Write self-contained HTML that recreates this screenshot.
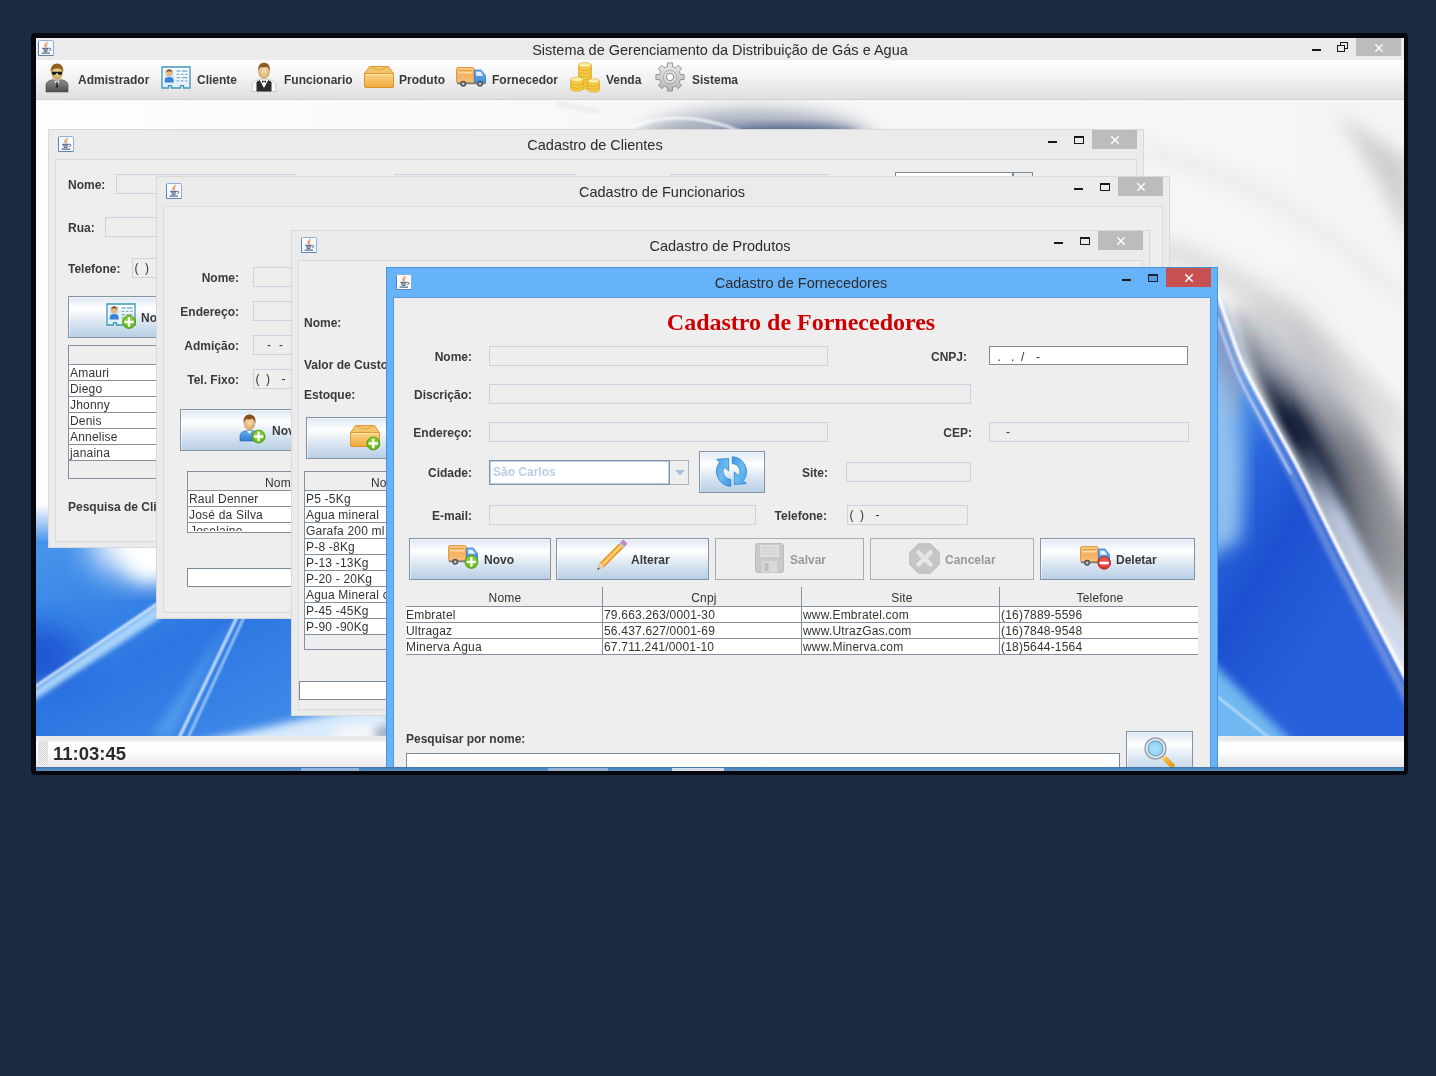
<!DOCTYPE html><html lang="pt"><head><meta charset="utf-8"><title>Sistema de Gerenciamento da Distribuição de Gás e Agua</title><style>
html,body{margin:0;padding:0}
body{background:#1c2a43;width:1436px;height:1076px;position:relative;overflow:hidden;font-family:"Liberation Sans",sans-serif}
#frame{position:absolute;left:31px;top:33px;width:1377px;height:742px;background:#06080d;border-radius:4px}
#clip{position:absolute;left:36px;top:38px;width:1368px;height:733px;overflow:hidden;background:#ececec}
#pg{position:absolute;left:-36px;top:-38px;width:1436px;height:1076px;will-change:transform}
#pg div,#pg span{position:absolute;box-sizing:content-box;white-space:nowrap}
.lb{font:bold 12px/14px "Liberation Sans",sans-serif;color:#3a3a3a}
.ld{color:#999 !important}
.tx{font:12px/14px "Liberation Sans",sans-serif;color:#333;letter-spacing:.2px}
.ti{font:14.500px/18px "Liberation Sans",sans-serif;color:#2c2c2c}
.tf{border:1px solid #c8d4e2;background:#eeeeee}
.tfw{border:1px solid #7a8a99;background:#fff}
.btn{border:1px solid #8492a2;background:linear-gradient(#dde8f3 0%,#ffffff 30%,#dde8f3 60%,#b8cfe5 100%);box-shadow:inset 1px 1px 0 rgba(255,255,255,.55)}
.btnd{border:1px solid #a9aeb4;background:#eeeeee}
.win{background:#ebebeb;border:1px solid #d9d9d9}
.pan{background:#eeeeee;border:1px solid #dadada}
.cx{background:#bcbcbc}
.tb{background:#fff;border:1px solid #8490a0}
.th{background:#eeeeee;border-bottom:1px solid #8490a0}
.row{border-bottom:1px solid #8490a0;background:#fff}
</style></head><body><div id="frame"></div><div id="clip"><div id="pg"><div style="left:36px;top:38px;width:1368px;height:22px;background:#ebebeb"></div><svg style="position:absolute;left:38px;top:40px;overflow:visible" width="16" height="16" viewBox="0 0 16 16" ><rect x="0.5" y="0.5" width="15" height="15" rx="1" fill="#f7fafe" stroke="#8fb0d8"/><path d="M0.5 1.500v14h15" fill="none" stroke="#5a84b8" stroke-width="1"/><path d="M8.800 2.200c1.700 1.500-2 2.400-.4 4.500M7.100 3.800c.9 1-1.100 1.600 0 2.800" stroke="#e79a52" stroke-width="1.200" fill="none" stroke-linecap="round"/><path d="M4.200 8.300h6.600M5 9.900h5.200M5.800 11.300h3.600" stroke="#3f4f74" stroke-width="1" fill="none"/><path d="M3.600 13.100h8.400" stroke="#3f4f74" stroke-width="1.100" fill="none"/><path d="M11.200 8.300c2.200-.4 2.200 2 .1 2.300" stroke="#3f4f74" stroke-width=".9" fill="none"/></svg><span class="ti" style="left:420px;top:41px;width:600px;text-align:center">Sistema de Gerenciamento da Distribuição de Gás e Agua</span><div class="cx" style="left:1356px;top:38px;width:45px;height:18px;"></div><svg style="position:absolute;left:1373.5px;top:42.5px" width="10" height="10" viewBox="0 0 10 10"><path d="M1.300 1.300l7.400 7.400M8.700 1.300l-7.400 7.400" stroke="#fff" stroke-width="1.400"/></svg><div style="left:1312px;top:48.5px;width:8.5px;height:2.2px;background:#1a1a1a"></div><div style="left:1340px;top:42px;width:6px;height:5px;border:1px solid #1a1a1a;border-top:1.500px solid #1a1a1a"></div><div style="left:1337px;top:44.5px;width:6px;height:5px;border:1px solid #1a1a1a;border-top:1.500px solid #1a1a1a;background:#ebebeb"></div><div style="left:36px;top:60px;width:1368px;height:40px;background:linear-gradient(#fefefe 0%,#f6f6f6 35%,#dfdfdf 100%);border-bottom:1px solid #d2d2d2;height:39px"></div><svg style="position:absolute;left:45px;top:63px;overflow:visible" width="24" height="30" viewBox="0 0 24 30" ><defs><linearGradient id="adS" x1="0" y1="0" x2="0" y2="1"><stop offset="0" stop-color="#8e8e8e"/><stop offset="1" stop-color="#4f4f4f"/></linearGradient><radialGradient id="adF" cx=".5" cy=".4" r=".6"><stop offset="0" stop-color="#efd79a"/><stop offset="1" stop-color="#c9a660"/></radialGradient></defs><path d="M1 29v-7c0-3 3-4.4 7-5.4l4 1.5 4-1.5c4 1 7 2.400 7 5.400v7z" fill="url(#adS)" stroke="#4a4a4a" stroke-width=".6"/><path d="M9.300 17.300l2.700 6 2.700-6-2.700 1z" fill="#f4f4f4"/><path d="M11.400 18.800h1.200l.5 5-1.100 1.400-1.100-1.400z" fill="#2a2a2a"/><ellipse cx="12" cy="10" rx="5.300" ry="6.500" fill="url(#adF)" stroke="#a07a38" stroke-width=".5"/><path d="M5.900 9.500c-1-6 2.600-9 6.200-9s7.200 3 6 9c-.7-2.700-2-4-6-4s-5.200 1.300-6.200 4z" fill="#94601f"/><path d="M6.900 8.700h10.200v1.300c0 1.300-1.200 1.900-2.300 1.900s-2.100-.7-2.400-1.800h-.8c-.3 1.100-1.300 1.800-2.400 1.800s-2.300-.6-2.300-1.900z" fill="#1c1c1c"/></svg><span class="lb" style="left:78px;top:73px">Admistrador</span><svg style="position:absolute;left:161px;top:66px;overflow:visible" width="30" height="23" viewBox="0 0 30 23" ><defs><linearGradient id="ccB" x1="0" y1="0" x2="0" y2="1"><stop offset="0" stop-color="#fdfefe"/><stop offset="1" stop-color="#dfeef5"/></linearGradient></defs><path d="M1 1h28v21h-6.500v-2.300h-3v2.300h-9v-2.300h-3v2.300h-6.500z" fill="url(#ccB)" stroke="#3e96b8" stroke-width="1.300"/><rect x="3.500" y="3.500" width="9.500" height="13" fill="#cfe4f4"/><circle cx="8.200" cy="7.500" r="3" fill="#e8b878"/><path d="M5.200 6.800c0-2.700 1.600-3.600 3-3.600s3.100.9 3 3.600c-.8-1.300-1.800-1.600-3-1.600s-2.200.3-3 1.600z" fill="#7a4a18"/><path d="M3.800 16.500v-2.500c0-2 2-3 4.400-3s4.400 1 4.400 3v2.500z" fill="#3a82d8"/><path d="M15.500 5h4M21 5h5.500M15.500 8.300h3M20 8.300h2.500M24 8.300h2.500M15.500 11.600h3.500M20.500 11.600h6M15.500 14.900h2.500M19.500 14.900h3M24 14.900h2.500" stroke="#7fb0c8" stroke-width="1.300"/></svg><span class="lb" style="left:197px;top:73px">Cliente</span><svg style="position:absolute;left:251px;top:62px;overflow:visible" width="26" height="30" viewBox="0 0 26 30" ><defs><radialGradient id="wtF" cx=".5" cy=".4" r=".6"><stop offset="0" stop-color="#f6deb0"/><stop offset="1" stop-color="#d9ae6e"/></radialGradient></defs><path d="M1 29.500v-6.500c0-3 3.500-4.500 8-5.500l4 1 4-1c4.500 1 8 2.500 8 5.500v6.500z" fill="#f7f7f7" stroke="#bdbdbd" stroke-width=".7"/><path d="M5.500 29.500v-9.500l3.200-2 4.300 8 4.300-8 3.200 2v9.500z" fill="#2b2b2b"/><path d="M10 18l3 7 3-7-3 1z" fill="#fff"/><path d="M11 18.600l2 1 2-1v2.200l-2-.8-2 .8z" fill="#1a1a1a"/><ellipse cx="13" cy="10" rx="5.300" ry="6.600" fill="url(#wtF)" stroke="#b08848" stroke-width=".5"/><path d="M7.300 9.500c-1-5.500 2-8.700 5.700-8.700s7 3 5.700 8.700c-.5-2.800-1.500-4.300-3-4.800-2 .8-5 .8-6.500.3-.9.700-1.500 2.200-1.900 4.500z" fill="#8a5a22"/></svg><span class="lb" style="left:284px;top:73px">Funcionario</span><svg style="position:absolute;left:363px;top:65px;overflow:visible" width="32" height="23" viewBox="0 0 32 23" ><defs><linearGradient id="bxA" x1="0" y1="0" x2="0" y2="1"><stop offset="0" stop-color="#fbd68a"/><stop offset="1" stop-color="#f0a83a"/></linearGradient></defs><path d="M1.500 8.500l5-7h19l5 7v12.500q0 1.500-1.500 1.500h-26q-1.500 0-1.500-1.500z" fill="#f4c46c" stroke="#d9932a" stroke-width=".9"/><path d="M1.500 8.500h29v12.500q0 1.500-1.500 1.500h-26q-1.500 0-1.500-1.500z" fill="url(#bxA)" stroke="#d9932a" stroke-width=".9"/><path d="M6.500 1.500l9.500 4 9.500-4" fill="none" stroke="#e0a040" stroke-width=".8"/><path d="M2.500 9.500h27" stroke="#fde9b8" stroke-width="1"/></svg><span class="lb" style="left:399px;top:73px">Produto</span><svg style="position:absolute;left:456px;top:67px;overflow:visible" width="32" height="21" viewBox="0 0 32 21" ><defs><linearGradient id="tkA" x1="0" y1="0" x2="0" y2="1"><stop offset="0" stop-color="#fbd08c"/><stop offset=".45" stop-color="#f6b060"/><stop offset="1" stop-color="#f8c07a"/></linearGradient><linearGradient id="tkB" x1="0" y1="0" x2="0" y2="1"><stop offset="0" stop-color="#6fb4f0"/><stop offset="1" stop-color="#3f86d6"/></linearGradient></defs><rect x=".6" y=".6" width="17.400" height="15.400" rx="1.300" fill="url(#tkA)" stroke="#d9943c" stroke-width="1"/><path d="M2.500 3.600h13.600" stroke="#e39a3e" stroke-width="1"/><path d="M2.500 5.800h13.600" stroke="#fde2b4" stroke-width="1.200"/><path d="M18.500 3h6.500l4.500 5.500v8h-11z" fill="url(#tkB)" stroke="#3a78c4" stroke-width=".8"/><path d="M20.300 4.700h4l3 4h-7z" fill="#e6f3fe"/><rect x="1" y="15.600" width="28" height="1.600" fill="#7a7a7a"/><circle cx="7.200" cy="16.800" r="3" fill="#555"/><circle cx="7.200" cy="16.800" r="1.400" fill="#d0c8d0"/><circle cx="24" cy="16.800" r="3" fill="#555"/><circle cx="24" cy="16.800" r="1.400" fill="#d0c8d0"/></svg><span class="lb" style="left:492px;top:73px">Fornecedor</span><svg style="position:absolute;left:569px;top:62px;overflow:visible" width="32" height="30" viewBox="0 0 32 30" ><path d="M9.5 21.6v3.1a6.5 2.4 0 0 0 13.0 0v-3.1z" fill="#f6cb45" stroke="#d9a31c" stroke-width=".6"/><ellipse cx="16" cy="21.6" rx="6.5" ry="2.4" fill="#fdeea6" stroke="#d9a31c" stroke-width=".6"/><path d="M9.5 18.5v3.1a6.5 2.4 0 0 0 13.0 0v-3.1z" fill="#f6cb45" stroke="#d9a31c" stroke-width=".6"/><ellipse cx="16" cy="18.5" rx="6.5" ry="2.4" fill="#fdeea6" stroke="#d9a31c" stroke-width=".6"/><path d="M9.5 15.4v3.1a6.5 2.4 0 0 0 13.0 0v-3.1z" fill="#f6cb45" stroke="#d9a31c" stroke-width=".6"/><ellipse cx="16" cy="15.4" rx="6.5" ry="2.4" fill="#fdeea6" stroke="#d9a31c" stroke-width=".6"/><path d="M9.5 12.3v3.1a6.5 2.4 0 0 0 13.0 0v-3.1z" fill="#f6cb45" stroke="#d9a31c" stroke-width=".6"/><ellipse cx="16" cy="12.3" rx="6.5" ry="2.4" fill="#fdeea6" stroke="#d9a31c" stroke-width=".6"/><path d="M9.5 9.2v3.1a6.5 2.4 0 0 0 13.0 0v-3.1z" fill="#f6cb45" stroke="#d9a31c" stroke-width=".6"/><ellipse cx="16" cy="9.2" rx="6.5" ry="2.4" fill="#fdeea6" stroke="#d9a31c" stroke-width=".6"/><path d="M9.5 6.1v3.1a6.5 2.4 0 0 0 13.0 0v-3.1z" fill="#f6cb45" stroke="#d9a31c" stroke-width=".6"/><ellipse cx="16" cy="6.1" rx="6.5" ry="2.4" fill="#fdeea6" stroke="#d9a31c" stroke-width=".6"/><path d="M9.5 3.0v3.1a6.5 2.4 0 0 0 13.0 0v-3.1z" fill="#f6cb45" stroke="#d9a31c" stroke-width=".6"/><ellipse cx="16" cy="3.0" rx="6.5" ry="2.4" fill="#fdeea6" stroke="#d9a31c" stroke-width=".6"/><path d="M1.5 23.7v3.1a6.5 2.4 0 0 0 13.0 0v-3.1z" fill="#f6cb45" stroke="#d9a31c" stroke-width=".6"/><ellipse cx="8" cy="23.7" rx="6.5" ry="2.4" fill="#fdeea6" stroke="#d9a31c" stroke-width=".6"/><path d="M1.5 20.6v3.1a6.5 2.4 0 0 0 13.0 0v-3.1z" fill="#f6cb45" stroke="#d9a31c" stroke-width=".6"/><ellipse cx="8" cy="20.6" rx="6.5" ry="2.4" fill="#fdeea6" stroke="#d9a31c" stroke-width=".6"/><path d="M1.5 17.5v3.1a6.5 2.4 0 0 0 13.0 0v-3.1z" fill="#f6cb45" stroke="#d9a31c" stroke-width=".6"/><ellipse cx="8" cy="17.5" rx="6.5" ry="2.4" fill="#fdeea6" stroke="#d9a31c" stroke-width=".6"/><path d="M18.5 25v3a6 2.2 0 0 0 12 0v-3z" fill="#f6cb45" stroke="#d9a31c" stroke-width=".6"/><ellipse cx="24.5" cy="25" rx="6" ry="2.2" fill="#fdeea6" stroke="#d9a31c" stroke-width=".6"/><path d="M18.5 22v3a6 2.2 0 0 0 12 0v-3z" fill="#f6cb45" stroke="#d9a31c" stroke-width=".6"/><ellipse cx="24.5" cy="22" rx="6" ry="2.2" fill="#fdeea6" stroke="#d9a31c" stroke-width=".6"/><path d="M18.5 19v3a6 2.2 0 0 0 12 0v-3z" fill="#f6cb45" stroke="#d9a31c" stroke-width=".6"/><ellipse cx="24.5" cy="19" rx="6" ry="2.2" fill="#fdeea6" stroke="#d9a31c" stroke-width=".6"/></svg><span class="lb" style="left:606px;top:73px">Venda</span><svg style="position:absolute;left:655px;top:62px;overflow:visible" width="30" height="30" viewBox="0 0 30 30" ><defs><linearGradient id="grA" x1="0" y1="0" x2="0" y2="1"><stop offset="0" stop-color="#e9e9e9"/><stop offset="1" stop-color="#b4b4b4"/></linearGradient></defs><path d="M25.50 12.48 L29.07 12.43 L29.07 17.57 L25.50 17.52 L24.21 20.64 L26.76 23.13 L23.13 26.76 L20.64 24.21 L17.52 25.50 L17.57 29.07 L12.43 29.07 L12.48 25.50 L9.36 24.21 L6.87 26.76 L3.24 23.13 L5.79 20.64 L4.50 17.52 L0.93 17.57 L0.93 12.43 L4.50 12.48 L5.79 9.36 L3.24 6.87 L6.87 3.24 L9.36 5.79 L12.48 4.50 L12.43 0.93 L17.57 0.93 L17.52 4.50 L20.64 5.79 L23.13 3.24 L26.76 6.87 L24.21 9.36Z" fill="url(#grA)" stroke="#8c8c8c" stroke-width=".9" stroke-linejoin="round"/><circle cx="15" cy="15" r="6.600" fill="#dcdcdc" stroke="#a4a4a4" stroke-width=".8"/><circle cx="15" cy="15" r="3.700" fill="#fbfbfb" stroke="#8c8c8c" stroke-width="1"/></svg><span class="lb" style="left:692px;top:73px">Sistema</span><svg style="position:absolute;left:36px;top:100px" width="1368" height="638" viewBox="36 100 1368 638"><defs>
<filter id="b1" x="-20%" y="-20%" width="140%" height="140%"><feGaussianBlur stdDeviation="0.9"/></filter>
<filter id="b2" x="-20%" y="-20%" width="140%" height="140%"><feGaussianBlur stdDeviation="2.5"/></filter>
<filter id="b4" x="-30%" y="-30%" width="160%" height="160%"><feGaussianBlur stdDeviation="5"/></filter>
<filter id="b8" x="-30%" y="-30%" width="160%" height="160%"><feGaussianBlur stdDeviation="9"/></filter>
<filter id="b16" x="-40%" y="-40%" width="180%" height="180%"><feGaussianBlur stdDeviation="16"/></filter>
<linearGradient id="wBase" x1="0" y1="0" x2="1" y2="0"><stop offset="0" stop-color="#fdfdfd"/><stop offset=".5" stop-color="#f7f7f7"/><stop offset="1" stop-color="#f5f5f5"/></linearGradient>
<linearGradient id="wBlueL" x1="0" y1="0" x2="1" y2="1"><stop offset="0" stop-color="#4796ec"/><stop offset=".45" stop-color="#2c76e2"/><stop offset="1" stop-color="#4a95ec"/></linearGradient>
<linearGradient id="wBlueR" gradientUnits="userSpaceOnUse" x1="1215" y1="420" x2="1400" y2="540"><stop offset="0" stop-color="#5a9eea"/><stop offset=".25" stop-color="#2a66dc"/><stop offset=".55" stop-color="#1d50d0"/><stop offset="1" stop-color="#2860dc"/></linearGradient>
<linearGradient id="wDark" gradientUnits="userSpaceOnUse" x1="0" y1="300" x2="0" y2="640"><stop offset="0" stop-color="#0c1632" stop-opacity="0"/><stop offset=".2" stop-color="#2a3550" stop-opacity=".4"/><stop offset=".35" stop-color="#0c1632" stop-opacity="1"/><stop offset=".5" stop-color="#0c1632" stop-opacity=".95"/><stop offset=".68" stop-color="#1a2236" stop-opacity=".5"/><stop offset="1" stop-color="#30343e" stop-opacity="0"/></linearGradient>
<linearGradient id="wGray" gradientUnits="userSpaceOnUse" x1="0" y1="290" x2="0" y2="700"><stop offset="0" stop-color="#5c6270" stop-opacity="0"/><stop offset=".2" stop-color="#6a7080" stop-opacity=".45"/><stop offset=".4" stop-color="#50545e" stop-opacity=".8"/><stop offset=".66" stop-color="#686b72" stop-opacity=".7"/><stop offset="1" stop-color="#8a8c90" stop-opacity="0"/></linearGradient>
<linearGradient id="wPale" gradientUnits="userSpaceOnUse" x1="0" y1="440" x2="0" y2="700"><stop offset="0" stop-color="#c6d2ea" stop-opacity="0"/><stop offset=".3" stop-color="#c6d2ea" stop-opacity=".9"/><stop offset="1" stop-color="#d4dcec" stop-opacity="1"/></linearGradient>
<clipPath id="wClip"><rect x="36" y="100" width="1368" height="638"/></clipPath>
</defs><g clip-path="url(#wClip)"><rect x="36" y="100" width="1368" height="638" fill="url(#wBase)"/><ellipse cx="755" cy="143" rx="120" ry="33" fill="#a3abbb" filter="url(#b8)"/><ellipse cx="785" cy="135" rx="72" ry="9" fill="#4a5f8c" filter="url(#b4)"/><path d="M626 130 C 660 113 700 115 742 132" stroke="#ffffff" stroke-width="2.500" fill="none" filter="url(#b1)" opacity=".85"/><path d="M555 103 L 600 112" stroke="#dadada" stroke-width="2" fill="none" filter="url(#b2)"/><path d="M1335 112 C 1362 150 1385 190 1410 245 L1410 160 Z" fill="#c2c2c2" filter="url(#b8)" opacity=".75"/><path d="M1150 236 C 1230 252 1300 300 1404 410 L1404 450 C 1320 350 1240 285 1150 256 Z" fill="#d6d6d6" filter="url(#b8)" opacity=".7"/><path d="M1143 150 C 1220 170 1300 200 1404 300" stroke="#e6e6e6" stroke-width="10" fill="none" filter="url(#b8)"/><path d="M1257.0 264.0 C1258.2 266.7 1259.0 266.8 1264.0 280.0 C1269.0 293.2 1278.8 324.2 1287.0 343.0 C1295.2 361.8 1304.0 376.2 1313.0 393.0 C1322.0 409.8 1332.2 427.2 1341.0 444.0 C1349.8 460.8 1358.2 478.3 1366.0 494.0 C1373.8 509.7 1374.7 512.0 1388.0 538.0 C1401.3 564.0 1432.5 624.0 1446.0 650.0 C1459.5 676.0 1465.2 686.7 1469.0 694.0" stroke="url(#wGray)" stroke-width="56" fill="none" filter="url(#b16)"/><path d="M1233.0 276.0 C1234.2 278.7 1235.0 278.8 1240.0 292.0 C1245.0 305.2 1254.8 336.2 1263.0 355.0 C1271.2 373.8 1280.0 388.2 1289.0 405.0 C1298.0 421.8 1308.2 439.2 1317.0 456.0 C1325.8 472.8 1334.2 490.3 1342.0 506.0 C1349.8 521.7 1350.7 524.0 1364.0 550.0 C1377.3 576.0 1408.5 636.0 1422.0 662.0 C1435.5 688.0 1441.2 698.7 1445.0 706.0" stroke="url(#wDark)" stroke-width="26" fill="none" filter="url(#b8)"/><path d="M1225.0 280.0 C1226.2 282.7 1227.0 282.8 1232.0 296.0 C1237.0 309.2 1246.8 340.2 1255.0 359.0 C1263.2 377.8 1272.0 392.2 1281.0 409.0 C1290.0 425.8 1300.2 443.2 1309.0 460.0 C1317.8 476.8 1326.2 494.3 1334.0 510.0 C1341.8 525.7 1342.7 528.0 1356.0 554.0 C1369.3 580.0 1400.5 640.0 1414.0 666.0 C1427.5 692.0 1433.2 702.7 1437.0 710.0" stroke="url(#wDark)" stroke-width="14" fill="none" filter="url(#b4)"/><path d="M1225.0 281.0 C1226.2 283.7 1227.0 283.8 1232.0 297.0 C1237.0 310.2 1246.8 341.2 1255.0 360.0 C1263.2 378.8 1272.0 393.2 1281.0 410.0 C1290.0 426.8 1300.2 444.2 1309.0 461.0 C1317.8 477.8 1326.2 495.3 1334.0 511.0 C1341.8 526.7 1342.7 529.0 1356.0 555.0 C1369.3 581.0 1400.5 641.0 1414.0 667.0 C1427.5 693.0 1433.2 703.7 1437.0 711.0" stroke="url(#wPale)" stroke-width="20" fill="none" filter="url(#b4)"/><path d="M1213.0 286.0 C1214.2 288.7 1215.0 288.8 1220.0 302.0 C1225.0 315.2 1234.8 346.2 1243.0 365.0 C1251.2 383.8 1260.0 398.2 1269.0 415.0 C1278.0 431.8 1288.2 449.2 1297.0 466.0 C1305.8 482.8 1314.2 500.3 1322.0 516.0 C1329.8 531.7 1330.7 534.0 1344.0 560.0 C1357.3 586.0 1388.5 646.0 1402.0 672.0 C1415.5 698.0 1421.2 708.7 1425.0 716.0 L1425 760 L1190 760 L1190 286 Z" fill="url(#wBlueR)"/><path d="M1200 300 L1222 304 L1244 360 L1236 420 L1200 420 Z" fill="#8a9cc4" filter="url(#b4)" opacity=".9"/><path d="M1205 350 C 1236 390 1250 440 1240 540 L1205 560 Z" fill="#8ec0f0" filter="url(#b8)"/><path d="M1205 655 L1300 750 L1205 750 Z" fill="#6fb8f0" filter="url(#b4)"/><path d="M1214 694 L1272 740" stroke="#c8e6fb" stroke-width="2" filter="url(#b1)"/><path d="M1206.0 290.0 C1207.2 292.7 1208.0 292.8 1213.0 306.0 C1218.0 319.2 1227.8 350.2 1236.0 369.0 C1244.2 387.8 1253.0 402.2 1262.0 419.0 C1271.0 435.8 1281.2 453.2 1290.0 470.0 C1298.8 486.8 1307.2 504.3 1315.0 520.0 C1322.8 535.7 1323.7 538.0 1337.0 564.0 C1350.3 590.0 1381.5 650.0 1395.0 676.0 C1408.5 702.0 1414.2 712.7 1418.0 720.0" stroke="#7f9fe0" stroke-width="8" fill="none" filter="url(#b2)" opacity=".75"/><path d="M1213.0 286.0 C1214.2 288.7 1215.0 288.8 1220.0 302.0 C1225.0 315.2 1234.8 346.2 1243.0 365.0 C1251.2 383.8 1260.0 398.2 1269.0 415.0 C1278.0 431.8 1288.2 449.2 1297.0 466.0 C1305.8 482.8 1314.2 500.3 1322.0 516.0 C1329.8 531.7 1330.7 534.0 1344.0 560.0 C1357.3 586.0 1388.5 646.0 1402.0 672.0 C1415.5 698.0 1421.2 708.7 1425.0 716.0" stroke="#ffffff" stroke-width="3.600" fill="none" filter="url(#b1)"/><path d="M1207.0 294.0 C1208.2 296.7 1209.0 296.8 1214.0 310.0 C1219.0 323.2 1228.8 354.2 1237.0 373.0 C1245.2 391.8 1254.0 406.2 1263.0 423.0 C1272.0 439.8 1286.3 465.5 1291.0 474.0" stroke="#e4ecfa" stroke-width="1.800" fill="none" filter="url(#b1)" opacity=".85"/><linearGradient id="wLs" x1="0" y1="0" x2="0" y2="1"><stop offset="0" stop-color="#fdfdfd" stop-opacity="1"/><stop offset="1" stop-color="#3a8ae8" stop-opacity="1"/></linearGradient><rect x="30" y="505" width="370" height="40" fill="url(#wLs)"/><rect x="30" y="544" width="370" height="200" fill="url(#wBlueL)"/><ellipse cx="140" cy="546" rx="50" ry="30" fill="#ffffff" filter="url(#b16)"/><ellipse cx="150" cy="558" rx="24" ry="24" fill="#ffffff" filter="url(#b8)"/><ellipse cx="40" cy="655" rx="40" ry="30" fill="#1d52d2" filter="url(#b16)"/><path d="M30 692 L160 603 L160 618 L30 703 Z" fill="#a8d4fa" filter="url(#b2)"/><path d="M30 690 L160 602" stroke="#e4f3ff" stroke-width="2.500" filter="url(#b1)"/><path d="M232 617 L172 738 L150 738 Z" fill="#5aa2ee" filter="url(#b4)" opacity=".7"/><path d="M238 615 L179 738" stroke="#e8f4ff" stroke-width="2.600" filter="url(#b1)"/><path d="M245 615 L188 738" stroke="#b9dcfb" stroke-width="2" filter="url(#b1)"/><path d="M190 744 L390 700 L390 750 Z" fill="#d8eafc" filter="url(#b4)"/><ellipse cx="380" cy="736" rx="50" ry="13" fill="#f4f6fb" filter="url(#b4)"/><ellipse cx="386" cy="733" rx="12" ry="7" fill="#9aa6c0" filter="url(#b4)"/></g></svg><div style="left:36px;top:736px;width:1368px;height:30px;background:linear-gradient(#ebebeb 0,#ebebeb 5px,#ffffff 6px,#fdfdfd 55%,#e9e9e9 100%)"></div><div style="left:36px;top:766.5px;width:1368px;height:4.5px;background:linear-gradient(#456f9c 0,#4d86bc 1.500px,#5a92c6 100%)"></div><div style="left:38px;top:741px;width:10px;height:24px;background:repeating-conic-gradient(#d2d2d2 0% 25%, #f6f6f6 0% 50%) 0 0/2px 2px"></div><span style="left:53px;top:744px;font:bold 18.500px/20px 'Liberation Sans',sans-serif;color:#2b2b2b">11:03:45</span><div class="win" style="left:48px;top:129px;width:1094px;height:417px;"></div><div class="pan" style="left:55px;top:159px;width:1080px;height:381px;"></div><svg style="position:absolute;left:58px;top:136px;overflow:visible" width="16" height="16" viewBox="0 0 16 16" ><rect x="0.5" y="0.5" width="15" height="15" rx="1" fill="#f7fafe" stroke="#8fb0d8"/><path d="M0.5 1.500v14h15" fill="none" stroke="#5a84b8" stroke-width="1"/><path d="M8.800 2.200c1.700 1.500-2 2.400-.4 4.500M7.100 3.800c.9 1-1.100 1.600 0 2.800" stroke="#e79a52" stroke-width="1.200" fill="none" stroke-linecap="round"/><path d="M4.200 8.300h6.600M5 9.900h5.200M5.800 11.300h3.600" stroke="#3f4f74" stroke-width="1" fill="none"/><path d="M3.600 13.100h8.400" stroke="#3f4f74" stroke-width="1.100" fill="none"/><path d="M11.200 8.300c2.200-.4 2.200 2 .1 2.300" stroke="#3f4f74" stroke-width=".9" fill="none"/></svg><span class="ti" style="left:445px;top:136px;width:300px;text-align:center">Cadastro de Clientes</span><div class="cx" style="left:1092px;top:130px;width:45px;height:19px;"></div><svg style="position:absolute;left:1109.5px;top:134.5px" width="10" height="10" viewBox="0 0 10 10"><path d="M1.300 1.300l7.400 7.400M8.700 1.300l-7.400 7.400" stroke="#fff" stroke-width="1.400"/></svg><div style="left:1074px;top:136px;width:8px;height:5px;border:1px solid #1a1a1a;border-top:2.500px solid #1a1a1a;background:transparent"></div><div style="left:1048px;top:141px;width:8.5px;height:2.2px;background:#1a1a1a"></div><span class="lb" style="left:68px;top:178px">Nome:</span><div class="tf" style="left:116px;top:174px;width:178px;height:18px"></div><div class="tf" style="left:395px;top:174px;width:179px;height:18px"></div><div class="tf" style="left:670px;top:174px;width:156px;height:18px"></div><div class="tfw" style="left:895px;top:172px;width:116px;height:20px;"></div><div style="left:1013px;top:172px;width:18px;height:20px;border:1px solid #7a8a99;background:#eee"></div><span class="lb" style="left:68px;top:221px">Rua:</span><div class="tf" style="left:105px;top:217px;width:193px;height:18px"></div><span class="lb" style="left:68px;top:262px">Telefone:</span><div class="tf" style="left:132px;top:258px;width:116px;height:18px"><span class="tx" style="left:1.500px;top:2px;letter-spacing:1.600px">( )</span></div><div class="btn" style="left:68px;top:296px;width:190px;height:40px"></div><svg style="position:absolute;left:106px;top:303px;overflow:visible" width="30" height="23" viewBox="0 0 30 23" ><defs><linearGradient id="ccB" x1="0" y1="0" x2="0" y2="1"><stop offset="0" stop-color="#fdfefe"/><stop offset="1" stop-color="#dfeef5"/></linearGradient></defs><path d="M1 1h28v21h-6.500v-2.300h-3v2.300h-9v-2.300h-3v2.300h-6.500z" fill="url(#ccB)" stroke="#3e96b8" stroke-width="1.300"/><rect x="3.500" y="3.500" width="9.500" height="13" fill="#cfe4f4"/><circle cx="8.200" cy="7.500" r="3" fill="#e8b878"/><path d="M5.200 6.800c0-2.700 1.600-3.600 3-3.600s3.100.9 3 3.600c-.8-1.300-1.800-1.600-3-1.600s-2.200.3-3 1.600z" fill="#7a4a18"/><path d="M3.800 16.500v-2.500c0-2 2-3 4.400-3s4.400 1 4.400 3v2.500z" fill="#3a82d8"/><path d="M15.500 5h4M21 5h5.500M15.500 8.300h3M20 8.300h2.500M24 8.300h2.500M15.500 11.600h3.500M20.500 11.600h6M15.500 14.900h2.500M19.500 14.900h3M24 14.900h2.500" stroke="#7fb0c8" stroke-width="1.300"/><circle cx="23" cy="19" r="6.5" fill="#6ab81e" stroke="#4c9410" stroke-width=".8"/><circle cx="23" cy="18" r="5.1" fill="#9adc4e" opacity=".5"/><path d="M19.23 19h7.539999999999999M23 15.23v7.539999999999999" stroke="#fff" stroke-width="2.34" stroke-linecap="round"/></svg><span class="lb" style="left:141px;top:311px">Novo</span><div style="left:68px;top:345px;width:300px;height:132px;background:#eeeeee;border:1px solid #8490a0"></div><div class="th" style="left:69px;top:346px;width:300px;height:18px;"></div><div class="row" style="left:69px;top:365px;width:300px;height:15px;"></div><span class="tx" style="left:70px;top:366px">Amauri</span><div class="row" style="left:69px;top:381px;width:300px;height:15px;"></div><span class="tx" style="left:70px;top:382px">Diego</span><div class="row" style="left:69px;top:397px;width:300px;height:15px;"></div><span class="tx" style="left:70px;top:398px">Jhonny</span><div class="row" style="left:69px;top:413px;width:300px;height:15px;"></div><span class="tx" style="left:70px;top:414px">Denis</span><div class="row" style="left:69px;top:429px;width:300px;height:15px;"></div><span class="tx" style="left:70px;top:430px">Annelise</span><div class="row" style="left:69px;top:445px;width:300px;height:15px;"></div><span class="tx" style="left:70px;top:446px">janaina</span><span class="lb" style="left:68px;top:500px">Pesquisa de Clientes:</span><div class="win" style="left:156px;top:176px;width:1012px;height:441px;"></div><div class="pan" style="left:163px;top:206px;width:998px;height:405px;"></div><svg style="position:absolute;left:166px;top:183px;overflow:visible" width="16" height="16" viewBox="0 0 16 16" ><rect x="0.5" y="0.5" width="15" height="15" rx="1" fill="#f7fafe" stroke="#8fb0d8"/><path d="M0.5 1.500v14h15" fill="none" stroke="#5a84b8" stroke-width="1"/><path d="M8.800 2.200c1.700 1.500-2 2.400-.4 4.500M7.100 3.800c.9 1-1.100 1.600 0 2.800" stroke="#e79a52" stroke-width="1.200" fill="none" stroke-linecap="round"/><path d="M4.200 8.300h6.600M5 9.900h5.200M5.800 11.300h3.600" stroke="#3f4f74" stroke-width="1" fill="none"/><path d="M3.600 13.100h8.400" stroke="#3f4f74" stroke-width="1.100" fill="none"/><path d="M11.200 8.300c2.200-.4 2.200 2 .1 2.300" stroke="#3f4f74" stroke-width=".9" fill="none"/></svg><span class="ti" style="left:512px;top:183px;width:300px;text-align:center">Cadastro de Funcionarios</span><div class="cx" style="left:1118px;top:177px;width:45px;height:19px;"></div><svg style="position:absolute;left:1135.5px;top:181.5px" width="10" height="10" viewBox="0 0 10 10"><path d="M1.300 1.300l7.400 7.400M8.700 1.300l-7.400 7.400" stroke="#fff" stroke-width="1.400"/></svg><div style="left:1100px;top:183px;width:8px;height:5px;border:1px solid #1a1a1a;border-top:2.500px solid #1a1a1a;background:transparent"></div><div style="left:1074px;top:188px;width:8.5px;height:2.2px;background:#1a1a1a"></div><span class="lb" style="left:39px;top:271px;width:200px;text-align:right">Nome:</span><div class="tf" style="left:253px;top:267px;width:145px;height:18px"></div><span class="lb" style="left:39px;top:305px;width:200px;text-align:right">Endereço:</span><div class="tf" style="left:253px;top:301px;width:145px;height:18px"></div><span class="lb" style="left:39px;top:339px;width:200px;text-align:right">Admição:</span><div class="tf" style="left:253px;top:335px;width:145px;height:18px"><span class="tx" style="left:13px;top:2px;letter-spacing:2.300px">- -</span></div><span class="lb" style="left:39px;top:373px;width:200px;text-align:right">Tel. Fixo:</span><div class="tf" style="left:253px;top:369px;width:145px;height:18px"><span class="tx" style="left:1.500px;top:2px;letter-spacing:1.600px">( )&nbsp;&nbsp;-</span></div><div class="btn" style="left:180px;top:409px;width:198px;height:40px"></div><svg style="position:absolute;left:239px;top:414px;overflow:visible" width="27" height="27" viewBox="0 0 27 27" ><defs><radialGradient id="upF" cx=".5" cy=".4" r=".6"><stop offset="0" stop-color="#f6dcae"/><stop offset="1" stop-color="#dba868"/></radialGradient><linearGradient id="upS" x1="0" y1="0" x2="0" y2="1"><stop offset="0" stop-color="#6aaef0"/><stop offset="1" stop-color="#2f78d0"/></linearGradient></defs><path d="M1 27v-5c0-3.800 4-5.500 9.500-5.500s9.500 1.700 9.500 5.500v5z" fill="url(#upS)" stroke="#2a66b0" stroke-width=".6"/><path d="M8 16.800l2.500 3.500 2.500-3.500z" fill="#eef6ff"/><ellipse cx="10.500" cy="9.500" rx="5.300" ry="6.300" fill="url(#upF)" stroke="#b08848" stroke-width=".5"/><path d="M4.800 9.500c-1.200-5.500 2-9 5.700-9s7.200 3 5.700 9c-.4-2.500-1.200-4-2.800-4.800-2 1-4.500 1-6.200.4-1.200.8-1.900 2.200-2.400 4.400z" fill="#8a4f1c"/><circle cx="19.6" cy="22.5" r="6.5" fill="#6ab81e" stroke="#4c9410" stroke-width=".8"/><circle cx="19.6" cy="21.5" r="5.1" fill="#9adc4e" opacity=".5"/><path d="M15.830000000000002 22.5h7.539999999999999M19.6 18.73v7.539999999999999" stroke="#fff" stroke-width="2.34" stroke-linecap="round"/></svg><span class="lb" style="left:272px;top:424px">Novo</span><div style="left:187px;top:471px;width:200px;height:60px;background:#fff;border:1px solid #8490a0"></div><div class="th" style="left:188px;top:472px;width:200px;height:18px;"></div><span class="tx" style="left:265px;top:476px">Nome</span><div class="row" style="left:188px;top:491px;width:200px;height:15px;"></div><span class="tx" style="left:189px;top:492px">Raul Denner</span><div class="row" style="left:188px;top:507px;width:200px;height:15px;"></div><span class="tx" style="left:189px;top:508px">José da Silva</span><div style="left:188px;top:523px;width:200px;height:8px;overflow:hidden;background:#fff"><span class="tx" style="left:2px;top:1px">Joselaine</span></div><div class="tfw" style="left:187px;top:568px;width:211px;height:17px"></div><div class="win" style="left:291px;top:230px;width:857px;height:484px;"></div><div class="pan" style="left:298px;top:260px;width:843px;height:448px;"></div><svg style="position:absolute;left:301px;top:237px;overflow:visible" width="16" height="16" viewBox="0 0 16 16" ><rect x="0.5" y="0.5" width="15" height="15" rx="1" fill="#f7fafe" stroke="#8fb0d8"/><path d="M0.5 1.500v14h15" fill="none" stroke="#5a84b8" stroke-width="1"/><path d="M8.800 2.200c1.700 1.500-2 2.400-.4 4.500M7.100 3.800c.9 1-1.100 1.600 0 2.800" stroke="#e79a52" stroke-width="1.200" fill="none" stroke-linecap="round"/><path d="M4.200 8.300h6.600M5 9.900h5.200M5.800 11.300h3.600" stroke="#3f4f74" stroke-width="1" fill="none"/><path d="M3.600 13.100h8.400" stroke="#3f4f74" stroke-width="1.100" fill="none"/><path d="M11.200 8.300c2.200-.4 2.200 2 .1 2.300" stroke="#3f4f74" stroke-width=".9" fill="none"/></svg><span class="ti" style="left:570px;top:237px;width:300px;text-align:center">Cadastro de Produtos</span><div class="cx" style="left:1098px;top:231px;width:45px;height:19px;"></div><svg style="position:absolute;left:1115.5px;top:235.5px" width="10" height="10" viewBox="0 0 10 10"><path d="M1.300 1.300l7.400 7.400M8.700 1.300l-7.400 7.400" stroke="#fff" stroke-width="1.400"/></svg><div style="left:1080px;top:237px;width:8px;height:5px;border:1px solid #1a1a1a;border-top:2.500px solid #1a1a1a;background:transparent"></div><div style="left:1054px;top:242px;width:8.5px;height:2.2px;background:#1a1a1a"></div><span class="lb" style="left:304px;top:316px">Nome:</span><span class="lb" style="left:304px;top:358px">Valor de Custo:</span><span class="lb" style="left:304px;top:388px">Estoque:</span><div class="btn" style="left:306px;top:417px;width:192px;height:40px"></div><svg style="position:absolute;left:349px;top:424px;overflow:visible" width="32" height="23" viewBox="0 0 32 23" ><defs><linearGradient id="bxA" x1="0" y1="0" x2="0" y2="1"><stop offset="0" stop-color="#fbd68a"/><stop offset="1" stop-color="#f0a83a"/></linearGradient></defs><path d="M1.500 8.500l5-7h19l5 7v12.500q0 1.500-1.500 1.500h-26q-1.500 0-1.500-1.500z" fill="#f4c46c" stroke="#d9932a" stroke-width=".9"/><path d="M1.500 8.500h29v12.500q0 1.500-1.500 1.500h-26q-1.500 0-1.500-1.500z" fill="url(#bxA)" stroke="#d9932a" stroke-width=".9"/><path d="M6.500 1.500l9.500 4 9.500-4" fill="none" stroke="#e0a040" stroke-width=".8"/><path d="M2.500 9.500h27" stroke="#fde9b8" stroke-width="1"/><circle cx="24.3" cy="19.5" r="6.5" fill="#6ab81e" stroke="#4c9410" stroke-width=".8"/><circle cx="24.3" cy="18.5" r="5.1" fill="#9adc4e" opacity=".5"/><path d="M20.53 19.5h7.539999999999999M24.3 15.73v7.539999999999999" stroke="#fff" stroke-width="2.34" stroke-linecap="round"/></svg><div style="left:304px;top:471px;width:200px;height:177px;background:#eeeeee;border:1px solid #8490a0"></div><div class="th" style="left:305px;top:472px;width:200px;height:18px;"></div><span class="tx" style="left:371px;top:476px">Nome</span><div class="row" style="left:305px;top:491px;width:200px;height:15px;"></div><span class="tx" style="left:306px;top:492px">P5 -5Kg</span><div class="row" style="left:305px;top:507px;width:200px;height:15px;"></div><span class="tx" style="left:306px;top:508px">Agua mineral</span><div class="row" style="left:305px;top:523px;width:200px;height:15px;"></div><span class="tx" style="left:306px;top:524px">Garafa 200 ml</span><div class="row" style="left:305px;top:539px;width:200px;height:15px;"></div><span class="tx" style="left:306px;top:540px">P-8 -8Kg</span><div class="row" style="left:305px;top:555px;width:200px;height:15px;"></div><span class="tx" style="left:306px;top:556px">P-13 -13Kg</span><div class="row" style="left:305px;top:571px;width:200px;height:15px;"></div><span class="tx" style="left:306px;top:572px">P-20 - 20Kg</span><div class="row" style="left:305px;top:587px;width:200px;height:15px;"></div><span class="tx" style="left:306px;top:588px">Agua Mineral c</span><div class="row" style="left:305px;top:603px;width:200px;height:15px;"></div><span class="tx" style="left:306px;top:604px">P-45 -45Kg</span><div class="row" style="left:305px;top:619px;width:200px;height:15px;"></div><span class="tx" style="left:306px;top:620px">P-90 -90Kg</span><div class="tfw" style="left:299px;top:681px;width:299px;height:17px"></div><div style="left:386px;top:267px;width:830px;height:511px;background:#66b3f9;border:1px solid #4a93d6"></div><div style="left:393px;top:297px;width:816px;height:475px;background:#eeeeee;border:1px solid #559ade"></div><svg style="position:absolute;left:396px;top:274px;overflow:visible" width="16" height="16" viewBox="0 0 16 16" ><rect x="0.5" y="0.5" width="15" height="15" rx="1" fill="#f7fafe" stroke="#8fb0d8"/><path d="M0.5 1.500v14h15" fill="none" stroke="#5a84b8" stroke-width="1"/><path d="M8.800 2.200c1.700 1.500-2 2.400-.4 4.500M7.100 3.800c.9 1-1.100 1.600 0 2.800" stroke="#e79a52" stroke-width="1.200" fill="none" stroke-linecap="round"/><path d="M4.200 8.300h6.600M5 9.900h5.200M5.800 11.300h3.600" stroke="#3f4f74" stroke-width="1" fill="none"/><path d="M3.600 13.100h8.400" stroke="#3f4f74" stroke-width="1.100" fill="none"/><path d="M11.200 8.300c2.200-.4 2.200 2 .1 2.300" stroke="#3f4f74" stroke-width=".9" fill="none"/></svg><span class="ti" style="left:651px;top:274px;width:300px;text-align:center">Cadastro de Fornecedores</span><div style="left:1166px;top:268px;width:45px;height:19px;background:#c75050"></div><svg style="position:absolute;left:1183.5px;top:272.5px" width="10" height="10" viewBox="0 0 10 10"><path d="M1.300 1.300l7.400 7.400M8.700 1.300l-7.400 7.400" stroke="#fff" stroke-width="1.400"/></svg><div style="left:1148px;top:274px;width:8px;height:5px;border:1px solid #14243a;border-top:2.500px solid #14243a;background:#5a9be0"></div><div style="left:1122px;top:279px;width:8.5px;height:2.2px;background:#1a1a1a"></div><span style="left:500px;top:307px;width:602px;text-align:center;font:bold 24px/30px 'Liberation Serif',serif;color:#cc0000">Cadastro de Fornecedores</span><span class="lb" style="left:272px;top:350px;width:200px;text-align:right">Nome:</span><div class="tf" style="left:489px;top:346px;width:337px;height:18px"></div><span class="lb" style="left:767px;top:350px;width:200px;text-align:right">CNPJ:</span><div class="tfw" style="left:989px;top:346px;width:197px;height:17px"><span class="tx" style="left:7.500px;top:3px">.</span><span class="tx" style="left:21px;top:3px">.</span><span class="tx" style="left:31px;top:3px">/</span><span class="tx" style="left:46px;top:3px">-</span></div><span class="lb" style="left:272px;top:388px;width:200px;text-align:right">Discrição:</span><div class="tf" style="left:489px;top:384px;width:480px;height:18px"></div><span class="lb" style="left:272px;top:426px;width:200px;text-align:right">Endereço:</span><div class="tf" style="left:489px;top:422px;width:337px;height:18px"></div><span class="lb" style="left:772px;top:426px;width:200px;text-align:right">CEP:</span><div class="tf" style="left:989px;top:422px;width:198px;height:18px"><span class="tx" style="left:16px;top:2px">-</span></div><span class="lb" style="left:272px;top:466px;width:200px;text-align:right">Cidade:</span><div style="left:489px;top:460px;width:179px;height:23px;background:#fff;border:1px solid #8592a2;box-shadow:inset 1px 1px 0 #b8cfe5,inset -1px -1px 0 #b8cfe5"><span class="lb" style="left:3px;top:4px;color:#b8cfe5">São Carlos</span></div><div style="left:670px;top:460px;width:18px;height:23px;background:#eeeeee;border:1px solid #a9b2be;border-left:none"></div><svg style="position:absolute;left:675px;top:470px" width="10" height="6" viewBox="0 0 10 6"><path d="M0 0h10l-5 5.500z" fill="#a9c3dd"/></svg><div class="btn" style="left:699px;top:451px;width:64px;height:40px"></div><svg style="position:absolute;left:716px;top:456px;overflow:visible" width="31" height="31" viewBox="0 0 31 31" ><defs><linearGradient id="rfA" x1="0" y1="0" x2="1" y2="1"><stop offset="0" stop-color="#4aa0e6"/><stop offset=".5" stop-color="#6cbcf2"/><stop offset="1" stop-color="#3a94de"/></linearGradient></defs><path d="M14.800 30.300A15 15 0 0 1 3.600 6.200L0.600 3.300L12.700 2.400L12.700 15L8.200 11A8 8 0 0 0 14.800 23.300Z" fill="url(#rfA)" stroke="#2f86cc" stroke-width=".8" stroke-linejoin="round"/><path d="M14.800 30.300A15 15 0 0 1 3.600 6.200L0.600 3.300L12.700 2.400L12.700 15L8.200 11A8 8 0 0 0 14.800 23.300Z" fill="url(#rfA)" stroke="#2f86cc" stroke-width=".8" stroke-linejoin="round" transform="rotate(180 15.500 15.500)"/></svg><span class="lb" style="left:628px;top:466px;width:200px;text-align:right">Site:</span><div class="tf" style="left:846px;top:462px;width:123px;height:18px"></div><span class="lb" style="left:272px;top:509px;width:200px;text-align:right">E-mail:</span><div class="tf" style="left:489px;top:505px;width:265px;height:18px"></div><span class="lb" style="left:627px;top:509px;width:200px;text-align:right">Telefone:</span><div class="tf" style="left:847px;top:505px;width:119px;height:18px"><span class="tx" style="left:1.500px;top:2px;letter-spacing:1.600px">( )&nbsp;&nbsp;-</span></div><div class="btn" style="left:409px;top:538px;width:140px;height:40px"></div><svg style="position:absolute;left:448px;top:545px;overflow:visible" width="32" height="21" viewBox="0 0 32 21" ><defs><linearGradient id="tkA" x1="0" y1="0" x2="0" y2="1"><stop offset="0" stop-color="#fbd08c"/><stop offset=".45" stop-color="#f6b060"/><stop offset="1" stop-color="#f8c07a"/></linearGradient><linearGradient id="tkB" x1="0" y1="0" x2="0" y2="1"><stop offset="0" stop-color="#6fb4f0"/><stop offset="1" stop-color="#3f86d6"/></linearGradient></defs><rect x=".6" y=".6" width="17.400" height="15.400" rx="1.300" fill="url(#tkA)" stroke="#d9943c" stroke-width="1"/><path d="M2.500 3.600h13.600" stroke="#e39a3e" stroke-width="1"/><path d="M2.500 5.800h13.600" stroke="#fde2b4" stroke-width="1.200"/><path d="M18.500 3h6.500l4.500 5.500v8h-11z" fill="url(#tkB)" stroke="#3a78c4" stroke-width=".8"/><path d="M20.300 4.700h4l3 4h-7z" fill="#e6f3fe"/><rect x="1" y="15.600" width="28" height="1.600" fill="#7a7a7a"/><circle cx="7.200" cy="16.800" r="3" fill="#555"/><circle cx="7.200" cy="16.800" r="1.400" fill="#d0c8d0"/><circle cx="24" cy="16.800" r="3" fill="#555"/><circle cx="24" cy="16.800" r="1.400" fill="#d0c8d0"/><circle cx="23.4" cy="16.9" r="6.5" fill="#6ab81e" stroke="#4c9410" stroke-width=".8"/><circle cx="23.4" cy="15.899999999999999" r="5.1" fill="#9adc4e" opacity=".5"/><path d="M19.63 16.9h7.539999999999999M23.4 13.129999999999999v7.539999999999999" stroke="#fff" stroke-width="2.34" stroke-linecap="round"/></svg><span class="lb" style="left:484px;top:553px">Novo</span><div class="btn" style="left:556px;top:538px;width:151px;height:40px"></div><svg style="position:absolute;left:594px;top:541px;overflow:visible" width="32" height="32" viewBox="0 0 32 32" ><g transform="rotate(45 16 16)"><rect x="13.200" y="-5.500" width="5.600" height="3.800" rx="1.300" fill="#c98ad6" stroke="#9a5aa8" stroke-width=".5"/><rect x="13.200" y="-1.700" width="5.600" height="2.200" fill="#cfcfcf" stroke="#909090" stroke-width=".4"/><rect x="13.200" y=".5" width="5.600" height="26" fill="#f4a528" stroke="#c97f14" stroke-width=".5"/><rect x="14.900" y=".5" width="2.200" height="26" fill="#ffd27a"/><path d="M13.200 26.500h5.600l-2.800 7.500z" fill="#efd6a6" stroke="#b08850" stroke-width=".4"/><path d="M15.100 31.600l.9 2.400.9-2.400z" fill="#3a3a3a"/></g></svg><span class="lb" style="left:631px;top:553px">Alterar</span><div class="btnd" style="left:715px;top:538px;width:147px;height:40px"></div><svg style="position:absolute;left:755px;top:543px;overflow:visible" width="29" height="30" viewBox="0 0 29 30" ><rect x=".5" y=".5" width="28" height="29" rx="2.500" fill="#c9c9c9" stroke="#bdbdbd"/><rect x="5" y="2" width="19" height="12" fill="#dedede"/><path d="M6.500 5h16M6.500 8h16M6.500 11h16" stroke="#cdcdcd" stroke-width="1"/><rect x="7" y="18" width="15" height="11.500" fill="#d9d9d9"/><rect x="9.500" y="20" width="4" height="8" fill="#c0c0c0"/></svg><span class="lb ld" style="left:790px;top:553px">Salvar</span><div class="btnd" style="left:870px;top:538px;width:162px;height:40px"></div><svg style="position:absolute;left:909px;top:543px;overflow:visible" width="31" height="31" viewBox="0 0 31 31" ><path d="M9.500 .8h12l8.700 8.700v12l-8.700 8.700h-12l-8.700-8.700v-12z" fill="#c6c6c6" stroke="#bcbcbc"/><path d="M9.500 9.500l12 12M21.500 9.500l-12 12" stroke="#e6e6e6" stroke-width="4.500" stroke-linecap="round"/></svg><span class="lb ld" style="left:945px;top:553px">Cancelar</span><div class="btn" style="left:1040px;top:538px;width:153px;height:40px"></div><svg style="position:absolute;left:1080px;top:546px;overflow:visible" width="32" height="21" viewBox="0 0 32 21" ><defs><linearGradient id="tkA" x1="0" y1="0" x2="0" y2="1"><stop offset="0" stop-color="#fbd08c"/><stop offset=".45" stop-color="#f6b060"/><stop offset="1" stop-color="#f8c07a"/></linearGradient><linearGradient id="tkB" x1="0" y1="0" x2="0" y2="1"><stop offset="0" stop-color="#6fb4f0"/><stop offset="1" stop-color="#3f86d6"/></linearGradient></defs><rect x=".6" y=".6" width="17.400" height="15.400" rx="1.300" fill="url(#tkA)" stroke="#d9943c" stroke-width="1"/><path d="M2.500 3.600h13.600" stroke="#e39a3e" stroke-width="1"/><path d="M2.500 5.800h13.600" stroke="#fde2b4" stroke-width="1.200"/><path d="M18.500 3h6.500l4.500 5.500v8h-11z" fill="url(#tkB)" stroke="#3a78c4" stroke-width=".8"/><path d="M20.300 4.700h4l3 4h-7z" fill="#e6f3fe"/><rect x="1" y="15.600" width="28" height="1.600" fill="#7a7a7a"/><circle cx="7.200" cy="16.800" r="3" fill="#555"/><circle cx="7.200" cy="16.800" r="1.400" fill="#d0c8d0"/><circle cx="24" cy="16.800" r="3" fill="#555"/><circle cx="24" cy="16.800" r="1.400" fill="#d0c8d0"/><circle cx="24.2" cy="16.9" r="6.3" fill="#e0322c" stroke="#a81a16" stroke-width=".8"/><circle cx="24.2" cy="15.899999999999999" r="4.9" fill="#f47a70" opacity=".5"/><path d="M20.546 16.9h7.307999999999999" stroke="#fff" stroke-width="2.52" stroke-linecap="round"/></svg><span class="lb" style="left:1116px;top:553px">Deletar</span><div style="left:406px;top:588px;width:792px;height:18px;background:#eeeeee;border-bottom:1px solid #8490a0"></div><span class="tx" style="left:405px;top:591px;width:200px;text-align:center">Nome</span><span class="tx" style="left:604px;top:591px;width:200px;text-align:center">Cnpj</span><span class="tx" style="left:802px;top:591px;width:200px;text-align:center">Site</span><span class="tx" style="left:1000px;top:591px;width:200px;text-align:center">Telefone</span><div class="row" style="left:406px;top:607px;width:792px;height:15px;"></div><span class="tx" style="left:406px;top:608px">Embratel</span><span class="tx" style="left:604px;top:608px">79.663.263/0001-30</span><span class="tx" style="left:803px;top:608px">www.Embratel.com</span><span class="tx" style="left:1001px;top:608px">(16)7889-5596</span><div class="row" style="left:406px;top:623px;width:792px;height:15px;"></div><span class="tx" style="left:406px;top:624px">Ultragaz</span><span class="tx" style="left:604px;top:624px">56.437.627/0001-69</span><span class="tx" style="left:803px;top:624px">www.UtrazGas.com</span><span class="tx" style="left:1001px;top:624px">(16)7848-9548</span><div class="row" style="left:406px;top:639px;width:792px;height:15px;"></div><span class="tx" style="left:406px;top:640px">Minerva Agua</span><span class="tx" style="left:604px;top:640px">67.711.241/0001-10</span><span class="tx" style="left:803px;top:640px">www.Minerva.com</span><span class="tx" style="left:1001px;top:640px">(18)5644-1564</span><div style="left:602px;top:587px;width:1px;height:68px;background:#8490a0"></div><div style="left:801px;top:587px;width:1px;height:68px;background:#8490a0"></div><div style="left:999px;top:587px;width:1px;height:68px;background:#8490a0"></div><span class="lb" style="left:406px;top:732px">Pesquisar por nome:</span><div class="tfw" style="left:406px;top:753px;width:712px;height:20px"></div><div class="btn" style="left:1126px;top:731px;width:65px;height:42px"></div><svg style="position:absolute;left:1144px;top:737px;overflow:visible" width="31" height="32" viewBox="0 0 31 32" ><defs><radialGradient id="mgA" cx=".45" cy=".55" r=".7"><stop offset="0" stop-color="#a6e4fa"/><stop offset="1" stop-color="#8cc6ee"/></radialGradient><linearGradient id="mgH" x1="0" y1="0" x2="1" y2="1"><stop offset="0" stop-color="#f3e4c4"/><stop offset=".35" stop-color="#f7b53a"/><stop offset="1" stop-color="#e99a1a"/></linearGradient></defs><path d="M18.500 19l9.500 9.500" stroke="url(#mgH)" stroke-width="5.200" stroke-linecap="round"/><circle cx="11.500" cy="11.500" r="10.400" fill="#f4f8fb" stroke="#9aa2aa" stroke-width="1.500"/><circle cx="11.500" cy="11.500" r="7.600" fill="url(#mgA)" stroke="#6f9cc2" stroke-width="1.100"/></svg><div style="left:36px;top:766.5px;width:1368px;height:4.5px;background:linear-gradient(#456f9c 0,#4d86bc 1.500px,#5a92c6 100%)"></div><div style="left:548px;top:767.5px;width:60px;height:3.5px;background:#93b4d6"></div><div style="left:672px;top:767.5px;width:52px;height:3.5px;background:#d3dde8"></div><div style="left:301px;top:767.5px;width:58px;height:3.5px;background:#8fb6da"></div></div></div></body></html>
